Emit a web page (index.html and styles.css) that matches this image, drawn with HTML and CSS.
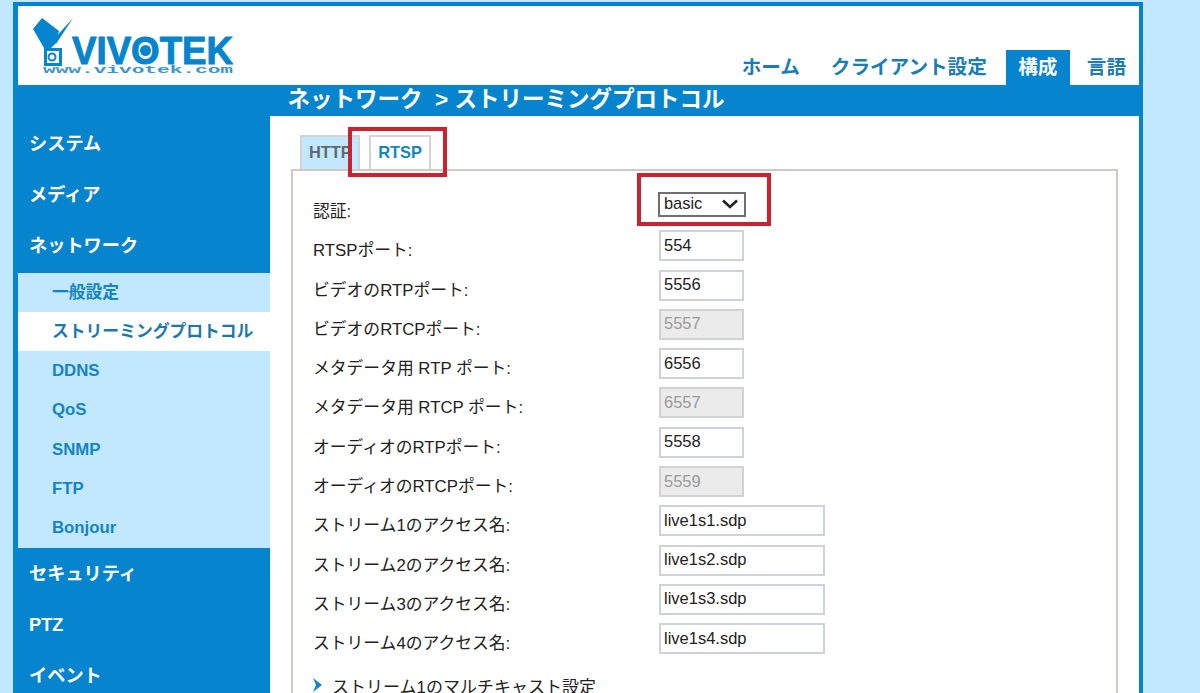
FILE: index.html
```html
<!DOCTYPE html>
<html lang="ja">
<head>
<meta charset="utf-8">
<title>VIVOTEK</title>
<link rel="stylesheet" href="styles.css">
</head>
<body>
<div class="frame">
  <header class="top">
    <svg class="logo" width="220" height="66" viewBox="0 0 220 66">
      <path class="logo-fill" d="M15 18 L24 7 L41 20 L38 32 L32 38 L26 37 Z"/>
      <path class="logo-fill" d="M35 29 L55 7 L38 33 Z"/>
      <rect class="logo-line" x="27.5" y="38.5" width="15" height="15"/>
      <circle class="logo-ring" cx="34" cy="46" r="3.5"/>
      <text class="logo-word" x="54" y="53" textLength="161" lengthAdjust="spacingAndGlyphs">VIVOTEK</text>
      <circle class="logo-fill" cx="127.5" cy="39.5" r="5.5"/>
      <text class="logo-url" x="25" y="62" textLength="190" lengthAdjust="spacingAndGlyphs">www.vivotek.com</text>
    </svg>
    <nav class="topnav">
      <a class="topnav-item topnav-home">ホーム</a>
      <a class="topnav-item topnav-client">クライアント設定</a>
      <a class="topnav-item topnav-active">構成</a>
      <a class="topnav-item topnav-lang">言語</a>
    </nav>
  </header>
  <div class="titlebar"><h1 class="title">ネットワーク&nbsp;&nbsp;&gt; ストリーミングプロトコル</h1></div>
  <div class="body">
    <aside class="side">
      <div class="side-main">システム</div>
      <div class="side-main">メディア</div>
      <div class="side-main">ネットワーク</div>
      <ul class="sub">
        <li class="sub-item">一般設定</li>
        <li class="sub-item sub-active">ストリーミングプロトコル</li>
        <li class="sub-item">DDNS</li>
        <li class="sub-item">QoS</li>
        <li class="sub-item">SNMP</li>
        <li class="sub-item">FTP</li>
        <li class="sub-item">Bonjour</li>
      </ul>
      <div class="side-main">セキュリティ</div>
      <div class="side-main">PTZ</div>
      <div class="side-main">イベント</div>
    </aside>
    <main class="content">
      <div class="tabs">
        <div class="tab tab-off">HTTP</div>
        <div class="tab tab-on">RTSP</div>
      </div>
      <section class="panel">
        <div class="row row-first"><label class="lbl">認証:</label>
          <div class="fakeselect"><span>basic</span>
            <svg class="chev" width="18" height="10" viewBox="0 0 18 10"><path d="M2 1.5 L9 8 L16 1.5"/></svg>
          </div>
        </div>
        <div class="row"><label class="lbl">RTSPポート:</label><input class="inp" value="554"></div>
        <div class="row"><label class="lbl">ビデオのRTPポート:</label><input class="inp" value="5556"></div>
        <div class="row"><label class="lbl">ビデオのRTCPポート:</label><input class="inp" value="5557" disabled></div>
        <div class="row"><label class="lbl">メタデータ用 RTP ポート:</label><input class="inp" value="6556"></div>
        <div class="row"><label class="lbl">メタデータ用 RTCP ポート:</label><input class="inp" value="6557" disabled></div>
        <div class="row"><label class="lbl">オーディオのRTPポート:</label><input class="inp" value="5558"></div>
        <div class="row"><label class="lbl">オーディオのRTCPポート:</label><input class="inp" value="5559" disabled></div>
        <div class="row"><label class="lbl">ストリーム1のアクセス名:</label><input class="inp inp-wide" value="live1s1.sdp"></div>
        <div class="row"><label class="lbl">ストリーム2のアクセス名:</label><input class="inp inp-wide" value="live1s2.sdp"></div>
        <div class="row"><label class="lbl">ストリーム3のアクセス名:</label><input class="inp inp-wide" value="live1s3.sdp"></div>
        <div class="row"><label class="lbl">ストリーム4のアクセス名:</label><input class="inp inp-wide" value="live1s4.sdp"></div>
        <div class="expander">
          <svg class="arrow" width="10" height="14" viewBox="0 0 10 14"><path d="M0 0 L9 7 L0 14 L3 7 Z"/></svg>
          <span>ストリーム1のマルチキャスト設定</span>
        </div>
      </section>
      <div class="mark mark-tab"></div>
      <div class="mark mark-select"></div>
    </main>
  </div>
</div>
</body>
</html>
```
FILE: styles.css
```css
html, body {
  margin: 0;
  height: 693px;
  overflow: hidden;
  background: #c2e8ff;
  font-family: "Liberation Sans", "Noto Sans CJK JP", sans-serif;
}
.frame {
  box-sizing: border-box;
  width: 1130px;
  height: 691px;
  margin: 2px 0 0 13px;
  border: solid #0784ce;
  border-width: 4px 4px 0 5px;
  display: flex;
  flex-direction: column;
  background: #0784ce;
  overflow: hidden;
}
.top {
  height: 79px;
  flex: none;
  background: #fff;
  display: flex;
  justify-content: space-between;
  align-items: flex-end;
}
.logo {
  align-self: flex-start;
  margin-top: 5px;
}
.logo-fill { fill: #0784ce; }
.logo-line { fill: none; stroke: #0784ce; stroke-width: 3; }
.logo-ring { fill: none; stroke: #0784ce; stroke-width: 2; }
.logo-word {
  font: 700 39px "Liberation Sans", sans-serif;
  fill: #0784ce;
  stroke: #0784ce;
  stroke-width: 1;
}
.logo-url {
  font: 700 11px "Liberation Mono", monospace;
  fill: #3a96cf;
}
.topnav {
  display: flex;
  align-items: flex-end;
  height: 35px;
}
.topnav-item {
  font-size: 19.6px;
  font-weight: 700;
  line-height: 35px;
  color: #1a7db4;
  white-space: nowrap;
}
.topnav-home { margin-right: 31px; }
.topnav-client { margin-right: 19px; }
.topnav-active {
  box-sizing: border-box;
  width: 64px;
  height: 35px;
  text-align: center;
  background: #0784ce;
  color: #fff;
}
.topnav-lang { margin: 0 13px 0 17px; }
.titlebar {
  height: 31px;
  flex: none;
  background: #0784ce;
  padding-left: 269.5px;
}
.title {
  margin: 0;
  font-size: 22.5px;
  font-weight: 700;
  line-height: 30px;
  color: #fff;
  white-space: nowrap;
}
.body {
  flex: 1;
  display: flex;
  min-height: 0;
}
.side {
  width: 252px;
  flex: none;
  background: #0784ce;
  padding-top: 2px;
}
.side-main {
  height: 51.2px;
  line-height: 52px;
  padding-left: 11px;
  font-size: 18.2px;
  font-weight: 700;
  color: #fff;
}
.sub {
  list-style: none;
  margin: 1px 0 0;
  padding: 0;
  background: #c2e8ff;
}
.sub-item {
  height: 39.3px;
  line-height: 40px;
  padding-left: 34px;
  font-size: 16.8px;
  font-weight: 700;
  color: #1484c4;
  white-space: nowrap;
}
.sub-active {
  background: #fff;
  color: #1c79ad;
}
.content {
  flex: 1;
  position: relative;
  background: #fff;
  min-height: 0;
}
.tabs {
  display: flex;
  gap: 9px;
  height: 34px;
  margin: 19px 0 0 30px;
  align-items: flex-end;
}
.tab {
  box-sizing: border-box;
  height: 34px;
  border: 2px solid #d4d4d4;
  border-bottom: 0;
  font-size: 16.4px;
  font-weight: 700;
  line-height: 30px;
  text-align: center;
  padding: 0 7px;
  white-space: nowrap;
}
.tab-off { width: 60px; background: #c2e8ff; color: #5f6a72; }
.tab-on { width: 62px; background: #fff; color: #1484c4; }
.panel {
  box-sizing: border-box;
  width: 827px;
  height: 560px;
  margin-left: 21px;
  border: solid #cfcac4;
  border-width: 2px 2px 0 2px;
  padding: 21px 0 0 20px;
  color: #222;
  font-size: 16.8px;
}
.row {
  display: flex;
  align-items: flex-start;
  height: 39.3px;
}
.row-first { height: 38.3px; }
.lbl {
  width: 346px;
  flex: none;
  padding-top: 9px;
  line-height: 23px;
  white-space: nowrap;
}
.row-first .lbl { padding-top: 8px; }
.fakeselect {
  box-sizing: border-box;
  width: 88px;
  height: 25px;
  margin-left: -1px;
  border: 2px solid #6f6f6f;
  padding: 0 5px 2px 4px;
  display: flex;
  justify-content: space-between;
  align-items: center;
  font-size: 16.4px;
  color: #222;
}
.chev { fill: none; stroke: #222; stroke-width: 2.6; }
.inp {
  box-sizing: border-box;
  width: 85px;
  height: 31px;
  margin: 0;
  border: 2px solid #cdd3da;
  padding: 0 0 1px 3px;
  background: #fff;
  font: 16.5px "Liberation Sans", sans-serif;
  color: #222;
  outline: 0;
}
.inp:disabled {
  background: #ebebeb;
  border-color: #d2d2d2;
  color: #9a9a9a;
}
.inp-wide { width: 166px; }
.expander {
  display: flex;
  align-items: center;
  gap: 9px;
  margin-top: 10px;
  font-size: 17px;
  white-space: nowrap;
}
.arrow { fill: #1484c4; }
.mark {
  position: absolute;
  box-sizing: border-box;
  border: 4px solid #cc2230;
}
.mark-tab { left: 78px; top: 11px; width: 99px; height: 50px; }
.mark-select { left: 367px; top: 57px; width: 134px; height: 53px; }
```
